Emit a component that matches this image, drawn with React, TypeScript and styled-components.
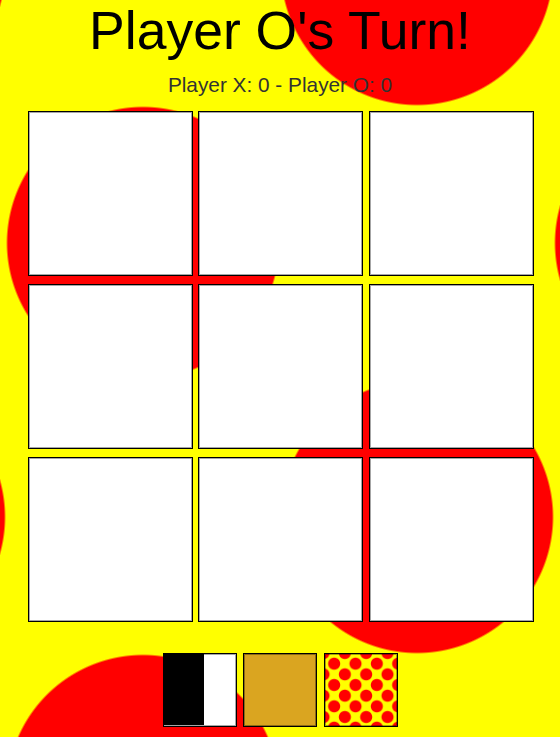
import React from "react";
import styled, { createGlobalStyle } from "styled-components";

const GlobalStyle = createGlobalStyle`
  html, body {
    margin: 0;
    padding: 0;
    min-height: 100%;
  }
  body {
    font-family: "Liberation Sans", Arial, sans-serif;
    background-color: #ffff00;
    background-image:
      radial-gradient(circle at 274px 274px, #ff0000 135px, rgba(255, 0, 0, 0) 137px),
      radial-gradient(circle at 274px 274px, #ff0000 135px, rgba(255, 0, 0, 0) 137px);
    background-size: 548px 548px;
    background-position: -131px -31px, 143px 243px;
    background-repeat: repeat;
  }
`;

const Page = styled.div`
  min-height: 100vh;
  padding-top: 1px;
  box-sizing: border-box;
  display: flex;
  flex-direction: column;
  align-items: center;
`;

const Title = styled.h1`
  margin: -1px 0 0;
  font-family: "Liberation Sans", Arial, sans-serif;
  font-size: 53.5px;
  font-weight: normal;
  line-height: normal;
  color: #000;
`;

const Score = styled.div`
  margin-top: 12px;
  font-size: 20.8px;
  line-height: normal;
  color: #333;
`;

const Board = styled.div`
  margin-top: 14px;
  padding-left: 1px;
  display: grid;
  grid-template-columns: repeat(3, 165px);
  grid-auto-rows: 165px;
  column-gap: 5.5px;
  row-gap: 8px;
`;

const Cell = styled.div`
  box-sizing: border-box;
  background: #fff;
  border: 1px solid #000;
  box-shadow: inset 0 0 0 1px rgba(0, 0, 0, 0.35);
`;

const Themes = styled.div`
  margin-top: 31px;
  display: flex;
  gap: 6.5px;
`;

const Swatch = styled.div<{ $kind: "classic" | "gold" | "dots" }>`
  box-sizing: border-box;
  width: 74px;
  height: 74px;
  border: 1px solid #000;
  box-shadow: inset 0 0 0 1px rgba(0, 0, 0, 0.35);
  display: flex;
  align-items: flex-start;
  background: ${(p) =>
    p.$kind === "gold" ? "#daa520" : p.$kind === "classic" ? "#fff" : "#ffff00"};
  ${(p) =>
    p.$kind === "dots"
      ? `
    background-image:
      radial-gradient(circle at 10.67px 10.67px, #ff0000 5.5px, rgba(255,0,0,0) 6.5px),
      radial-gradient(circle at 10.67px 10.67px, #ff0000 5.5px, rgba(255,0,0,0) 6.5px);
    background-size: 21.33px 21.33px;
    background-position: -1.5px -1px, 9.2px 9.7px;
  `
      : ""}
`;

const HalfBlack = styled.div`
  width: 40px;
  height: 71px;
  background: #000;
`;

export default function App() {
  return (
    <>
      <GlobalStyle />
      <Page>
        <Title>Player O's Turn!</Title>
        <Score>Player X: 0 - Player O: 0</Score>
        <Board>
          {Array.from({ length: 9 }).map((_, i) => (
            <Cell key={i} />
          ))}
        </Board>
        <Themes>
          <Swatch $kind="classic">
            <HalfBlack />
          </Swatch>
          <Swatch $kind="gold" />
          <Swatch $kind="dots" />
        </Themes>
      </Page>
    </>
  );
}
